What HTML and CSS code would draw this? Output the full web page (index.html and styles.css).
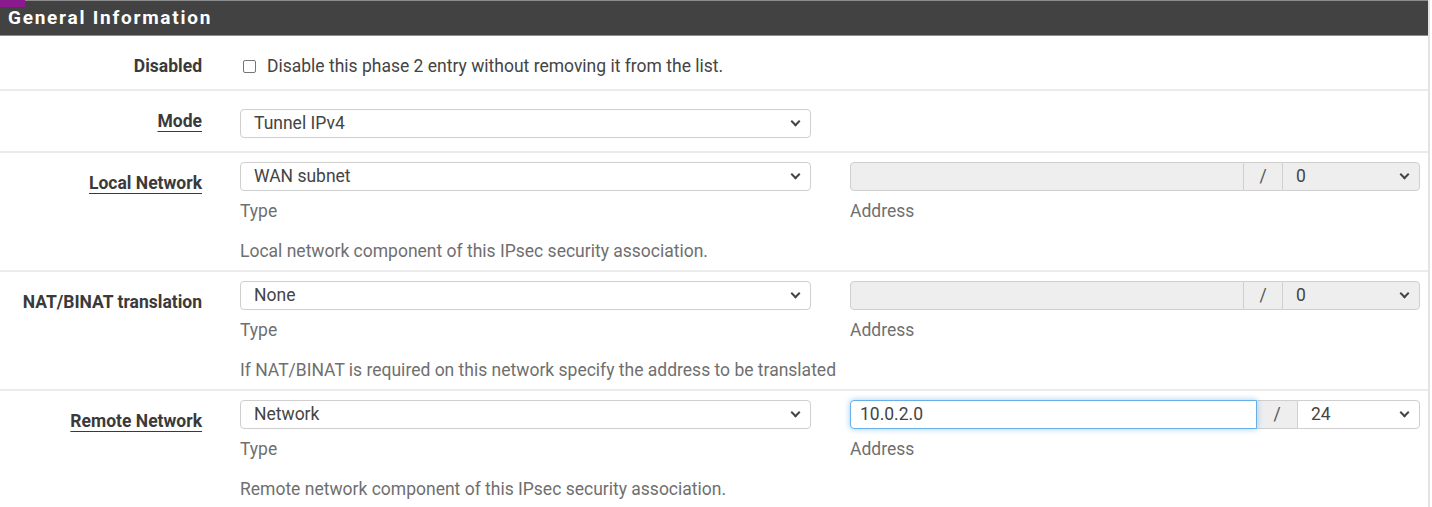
FILE: index.html
```html
<!DOCTYPE html>
<html>
<head>
<meta charset="utf-8">
<link rel="stylesheet" href="styles.css">
</head>
<body>
<div class="panel">
  <div class="corner"></div>
  <div class="panel-heading">General Information</div>
  <div class="row row-disabled">
    <div class="label">Disabled</div>
    <div class="field wide">
      <label class="check"><span class="box"></span>Disable this phase 2 entry without removing it from the list.</label>
    </div>
  </div>
  <div class="row row-mode">
    <div class="label"><u>Mode</u></div>
    <div class="field"><div class="select">Tunnel IPv4<span class="chev"></span></div></div>
  </div>
  <div class="row row-net">
    <div class="label"><u>Local Network</u></div>
    <div class="field">
      <div class="select">WAN subnet<span class="chev"></span></div>
      <div class="hint">Type</div>
      <div class="desc">Local network component of this IPsec security association.</div>
    </div>
    <div class="field">
      <div class="group disabled">
        <div class="input"></div>
        <div class="addon">/</div>
        <div class="select small">0<span class="chev"></span></div>
      </div>
      <div class="hint">Address</div>
    </div>
  </div>
  <div class="row row-net">
    <div class="label nou">NAT/BINAT translation</div>
    <div class="field">
      <div class="select">None<span class="chev"></span></div>
      <div class="hint">Type</div>
      <div class="desc nowrap">If NAT/BINAT is required on this network specify the address to be translated</div>
    </div>
    <div class="field">
      <div class="group disabled">
        <div class="input"></div>
        <div class="addon">/</div>
        <div class="select small">0<span class="chev"></span></div>
      </div>
      <div class="hint">Address</div>
    </div>
  </div>
  <div class="row row-net last">
    <div class="label"><u>Remote Network</u></div>
    <div class="field">
      <div class="select">Network<span class="chev"></span></div>
      <div class="hint">Type</div>
      <div class="desc">Remote network component of this IPsec security association.</div>
    </div>
    <div class="field">
      <div class="group">
        <div class="input focus">10.0.2.0</div>
        <div class="addon wide">/</div>
        <div class="select small narrow">24<span class="chev"></span></div>
      </div>
      <div class="hint">Address</div>
    </div>
  </div>
</div>
</body>
</html>
```
FILE: styles.css
```css
* { box-sizing: border-box; }
html, body { margin: 0; padding: 0; background: #fff; }
body { font-family: Roboto, "Liberation Sans", sans-serif; font-size: 17.5px; line-height: 20px; color: #333; }
.panel { position: relative; width: 1430px; border-right: 2px solid #e3e3e3; min-height: 507px; }
.corner { position: absolute; left: 0; top: 0; width: 25px; height: 7px; background: #8a1a8e; }
.panel-heading { height: 36px; background: #424242; border-top: 1px solid #8c8c8c; border-bottom: 1px solid #8c8c8c; color: #fff; font-weight: 700; font-size: 19px; letter-spacing: 1.75px; padding: 7px 0 0 8px; }
.row { display: flex; align-items: flex-start; border-bottom: 2px solid #ebebeb; }
.label { width: 202px; text-align: right; font-weight: 700; color: #3a3a3a; flex: none; }
.label u { text-decoration-thickness: 1px; text-underline-offset: 4px; }
.field { width: 571px; margin-left: 38px; flex: none; }
.field + .field { margin-left: 39px; width: 570px; }
.row-disabled { height: 55px; padding-top: 20px; }
.row-mode { height: 62px; padding-top: 18px; }
.row-mode .label { padding-top: 2px; }
.row-net { height: 119px; padding-top: 9px; }
.row-net .label { padding-top: 11px; }
.row-net.last { border-bottom: none; }
.check { display: flex; align-items: center; color: #444; }
.box { width: 13px; height: 13px; border: 1px solid #767676; border-radius: 2px; margin: 1px 11px 0 3px; background: #fff; flex: none; }
.select { position: relative; height: 29px; border: 1px solid #cfcfcf; border-radius: 4px; padding: 3px 0 0 13px; color: #444; background: #fff; }
.chev { position: absolute; right: 11px; top: 8px; width: 7px; height: 7px; border-right: 2px solid #444; border-bottom: 2px solid #444; transform: rotate(45deg); }
.hint { color: #6f6f6f; margin-top: 10px; }
.desc { color: #6f6f6f; margin-top: 20px; }
.nowrap { white-space: nowrap; }
.group { display: flex; height: 29px; }
.group .input { flex: 1; border: 1px solid #cfcfcf; border-radius: 4px 0 0 4px; padding: 3px 0 0 9px; color: #444; }
.group .addon { width: 38px; border-top: 1px solid #cfcfcf; border-bottom: 1px solid #cfcfcf; background: #eee; text-align: center; padding-top: 3px; color: #555; }
.group .addon.wide { width: 40px; }
.group .select.small { width: 138px; height: 29px; border-radius: 0 4px 4px 0; }
.group .select.narrow { width: 123px; }
.group.disabled .input, .group.disabled .select { background: #eee; }
.group .input.focus { border-color: #66afe9; box-shadow: 0 0 6px rgba(102,175,233,0.6); background: #fff; position: relative; z-index: 1; }
```
